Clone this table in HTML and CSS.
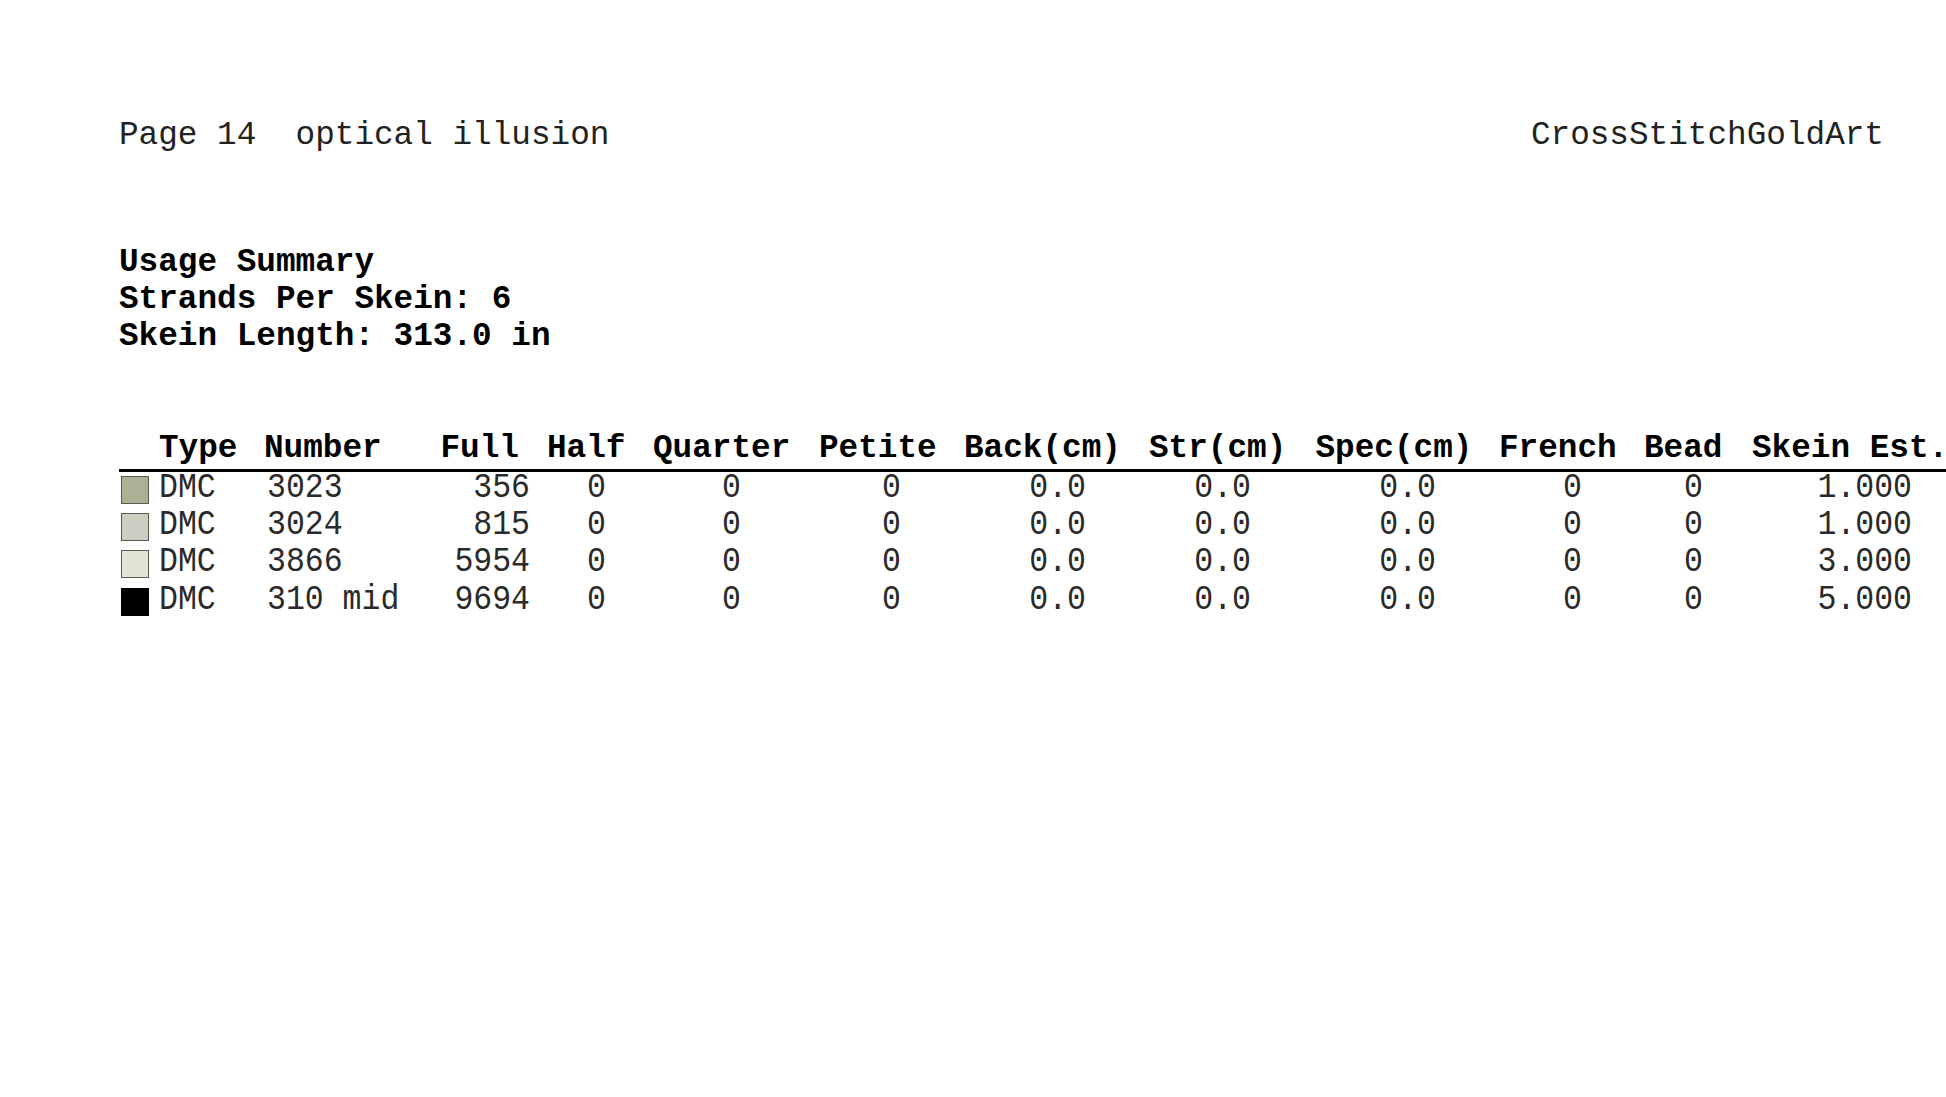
FILE: index.html
```html
<!DOCTYPE html>
<html>
<head>
<meta charset="utf-8">
<link rel="stylesheet" href="styles.css">
</head>
<body>
<div class="page">
  <div class="top">
    <span class="pre">Page 14  optical illusion</span>
    <span>CrossStitchGoldArt</span>
  </div>
  <div class="summary">
    <div>Usage Summary</div>
    <div>Strands Per Skein: 6</div>
    <div>Skein Length: 313.0 in</div>
  </div>
  <div class="table">
    <div class="row head">
      <div></div>
      <div>Type</div>
      <div>Number</div>
      <div>Full</div>
      <div>Half</div>
      <div>Quarter</div>
      <div>Petite</div>
      <div>Back(cm)</div>
      <div>Str(cm)</div>
      <div>Spec(cm)</div>
      <div>French</div>
      <div>Bead</div>
      <div>Skein Est.</div>
    </div>
    <div class="row data">
      <div><span class="sw c1"></span></div>
      <div><span class="v">DMC</span></div>
      <div><span class="v">3023</span></div>
      <div><span class="v">356</span></div>
      <div><span class="v">0</span></div>
      <div><span class="v">0</span></div>
      <div><span class="v">0</span></div>
      <div><span class="v">0.0</span></div>
      <div><span class="v">0.0</span></div>
      <div><span class="v">0.0</span></div>
      <div><span class="v">0</span></div>
      <div><span class="v">0</span></div>
      <div><span class="v">1.000</span></div>
    </div>
    <div class="row data">
      <div><span class="sw c2"></span></div>
      <div><span class="v">DMC</span></div>
      <div><span class="v">3024</span></div>
      <div><span class="v">815</span></div>
      <div><span class="v">0</span></div>
      <div><span class="v">0</span></div>
      <div><span class="v">0</span></div>
      <div><span class="v">0.0</span></div>
      <div><span class="v">0.0</span></div>
      <div><span class="v">0.0</span></div>
      <div><span class="v">0</span></div>
      <div><span class="v">0</span></div>
      <div><span class="v">1.000</span></div>
    </div>
    <div class="row data">
      <div><span class="sw c3"></span></div>
      <div><span class="v">DMC</span></div>
      <div><span class="v">3866</span></div>
      <div><span class="v">5954</span></div>
      <div><span class="v">0</span></div>
      <div><span class="v">0</span></div>
      <div><span class="v">0</span></div>
      <div><span class="v">0.0</span></div>
      <div><span class="v">0.0</span></div>
      <div><span class="v">0.0</span></div>
      <div><span class="v">0</span></div>
      <div><span class="v">0</span></div>
      <div><span class="v">3.000</span></div>
    </div>
    <div class="row data">
      <div><span class="sw c4"></span></div>
      <div><span class="v">DMC</span></div>
      <div><span class="v">310 mid</span></div>
      <div><span class="v">9694</span></div>
      <div><span class="v">0</span></div>
      <div><span class="v">0</span></div>
      <div><span class="v">0</span></div>
      <div><span class="v">0.0</span></div>
      <div><span class="v">0.0</span></div>
      <div><span class="v">0.0</span></div>
      <div><span class="v">0</span></div>
      <div><span class="v">0</span></div>
      <div><span class="v">5.000</span></div>
    </div>
  </div>
</div>
</body>
</html>
```

FILE: styles.css
```css
html, body {
  margin: 0;
  padding: 0;
  background: #fff;
  overflow: hidden;
}
body {
  width: 1946px;
  height: 1097px;
  font-family: "Liberation Mono", "Courier New", monospace;
  color: #111;
}
.page {
  padding: 117px 62px 0 119px;
}
.top {
  display: flex;
  justify-content: space-between;
  font-size: 32.7px;
  line-height: 37px;
  color: #222;
}
.pre {
  white-space: pre;
}
.summary {
  margin-top: 90px;
  font-size: 32.7px;
  line-height: 37px;
  font-weight: bold;
  color: #000;
}
.table {
  margin-top: 75px;
  margin-right: -200px;
}
.row {
  display: grid;
  grid-template-columns: 40px 105px 176.5px 106.5px 106px 166px 145px 185px 166.5px 183.5px 145px 108px 240px;
  white-space: nowrap;
}
.head {
  font-size: 32.7px;
  line-height: 37px;
  font-weight: bold;
  color: #000;
  padding-bottom: 2px;
  border-bottom: 3px solid #000;
}
.data {
  height: 37.2px;
  align-items: center;
  font-size: 31.5px;
  color: #2a2a2a;
}
.data > div {
  text-align: right;
}
.data > div:nth-child(1),
.data > div:nth-child(2),
.data > div:nth-child(3) {
  text-align: left;
}
.data > div:nth-child(3) { padding-left: 3px; }
.data > div:nth-child(4) { padding-right: 17px; }
.data > div:nth-child(5) { padding-right: 47px; }
.data > div:nth-child(6) { padding-right: 78px; }
.data > div:nth-child(7) { padding-right: 63px; }
.data > div:nth-child(8) { padding-right: 63px; }
.data > div:nth-child(9) { padding-right: 64.5px; }
.data > div:nth-child(10) { padding-right: 63px; }
.data > div:nth-child(11) { padding-right: 62px; }
.data > div:nth-child(12) { padding-right: 49px; }
.data > div:nth-child(13) { padding-right: 80px; }
.v {
  display: inline-block;
  transform: translateY(-2.5px) scaleY(1.12);
  line-height: 30px;
}
.sw {
  display: block;
  width: 26px;
  height: 26px;
  margin-left: 2px;
  margin-top: -1px;
  border: 1px solid #5a5a55;
}
.c1 { background: #adb095; }
.c2 { background: #cbcec0; }
.c3 { background: #e2e4d4; }
.c4 { background: #000; border-color: #000; }
```
